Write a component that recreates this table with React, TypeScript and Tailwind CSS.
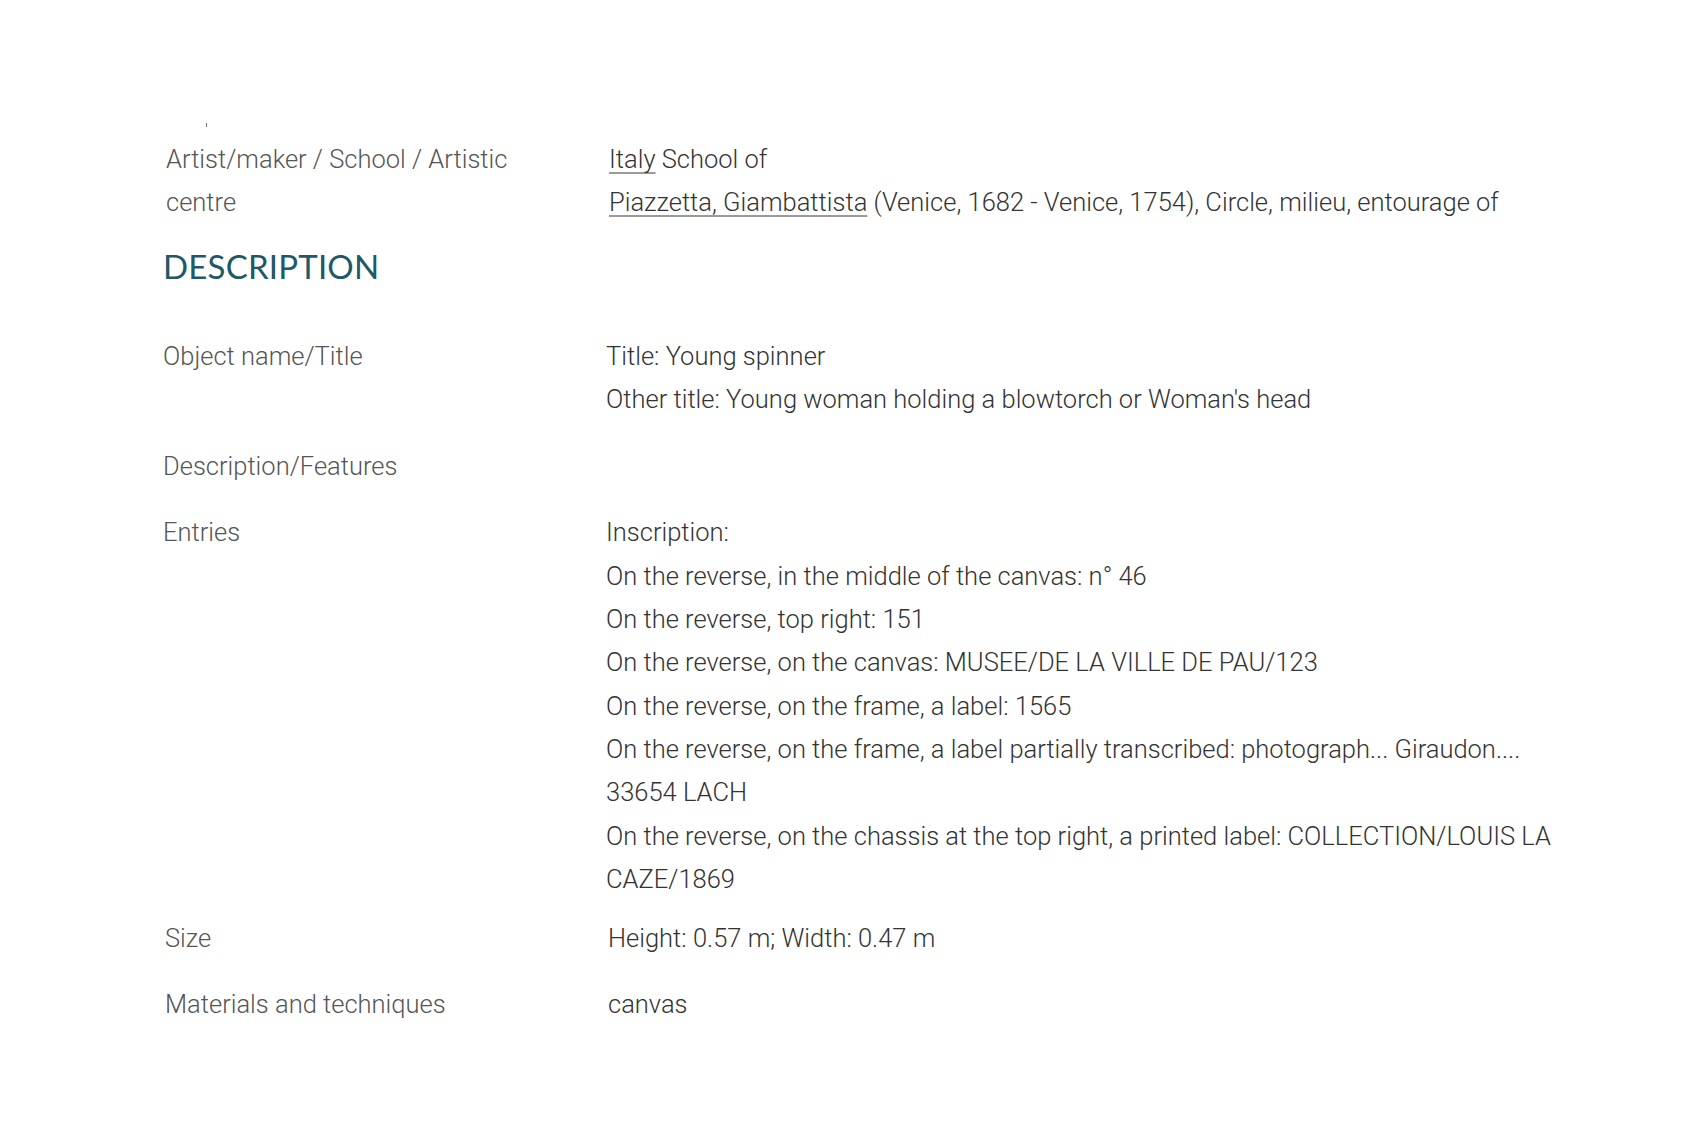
import React from "react";

const rob =
  "font-['Roboto_Light','Roboto',sans-serif] font-light text-[25.5px] leading-[43.3px]";

function Row({
  label,
  children,
  className = "",
}: {
  label: React.ReactNode;
  children?: React.ReactNode;
  className?: string;
}) {
  return (
    <div className={`grid grid-cols-[443px_1fr] ${className}`}>
      <div className={`${rob} text-[#555] pr-[60px]`}>{label}</div>
      <div className={`${rob} text-[#333]`}>{children}</div>
    </div>
  );
}

const link =
  "underline decoration-[#9a9a9a] decoration-[2px] underline-offset-[4px] [text-decoration-skip-ink:none]";

export default function App() {
  return (
    <div className="min-h-[1145px] w-[1688px] bg-white">
      <div className="pl-[163px] w-[1580px] pt-[123px]">
        <div className="h-[4px] w-[1px] bg-[#777] ml-[43px]" />
        <div className="mt-[11px] pl-[3px]">
          <Row label={<>Artist/maker / School / Artistic centre</>}>
            <div>
              <div>
                <span className={link}>Italy</span> School of
              </div>
              <div>
                <span className={link}>Piazzetta, Giambattista</span> (Venice, 1682 - Venice, 1754), Circle, milieu, entourage of
              </div>
            </div>
          </Row>
        </div>
        <h2 className="mt-[19px] font-['Lato',sans-serif] font-normal text-[33px] leading-[44px] text-[#1f5866] tracking-[0.2px] uppercase">
          Description
        </h2>
        <div className="mt-[47px]">
          <Row label="Object name/Title">
            <div>Title: Young spinner</div>
            <div>Other title: Young woman holding a blowtorch or Woman's head</div>
          </Row>
        </div>
        <div className="mt-[24px]">
          <Row label="Description/Features" />
        </div>
        <div className="mt-[23px]">
          <Row label="Entries">
            <div>Inscription:</div>
            <div>On the reverse, in the middle of the canvas: n° 46</div>
            <div>On the reverse, top right: 151</div>
            <div>On the reverse, on the canvas: MUSEE/DE LA VILLE DE PAU/123</div>
            <div>On the reverse, on the frame, a label: 1565</div>
            <div>
              On the reverse, on the frame, a label partially transcribed: photograph... Giraudon.... 33654 LACH
            </div>
            <div>
              On the reverse, on the chassis at the top right, a printed label: COLLECTION/LOUIS LA CAZE/1869
            </div>
          </Row>
        </div>
        <div className="mt-[16px] pl-[2px]">
          <Row label="Size">
            <div>Height: 0.57 m; Width: 0.47 m</div>
          </Row>
        </div>
        <div className="mt-[23px] pl-[2px]">
          <Row label="Materials and techniques">
            <div>canvas</div>
          </Row>
        </div>
      </div>
    </div>
  );
}
